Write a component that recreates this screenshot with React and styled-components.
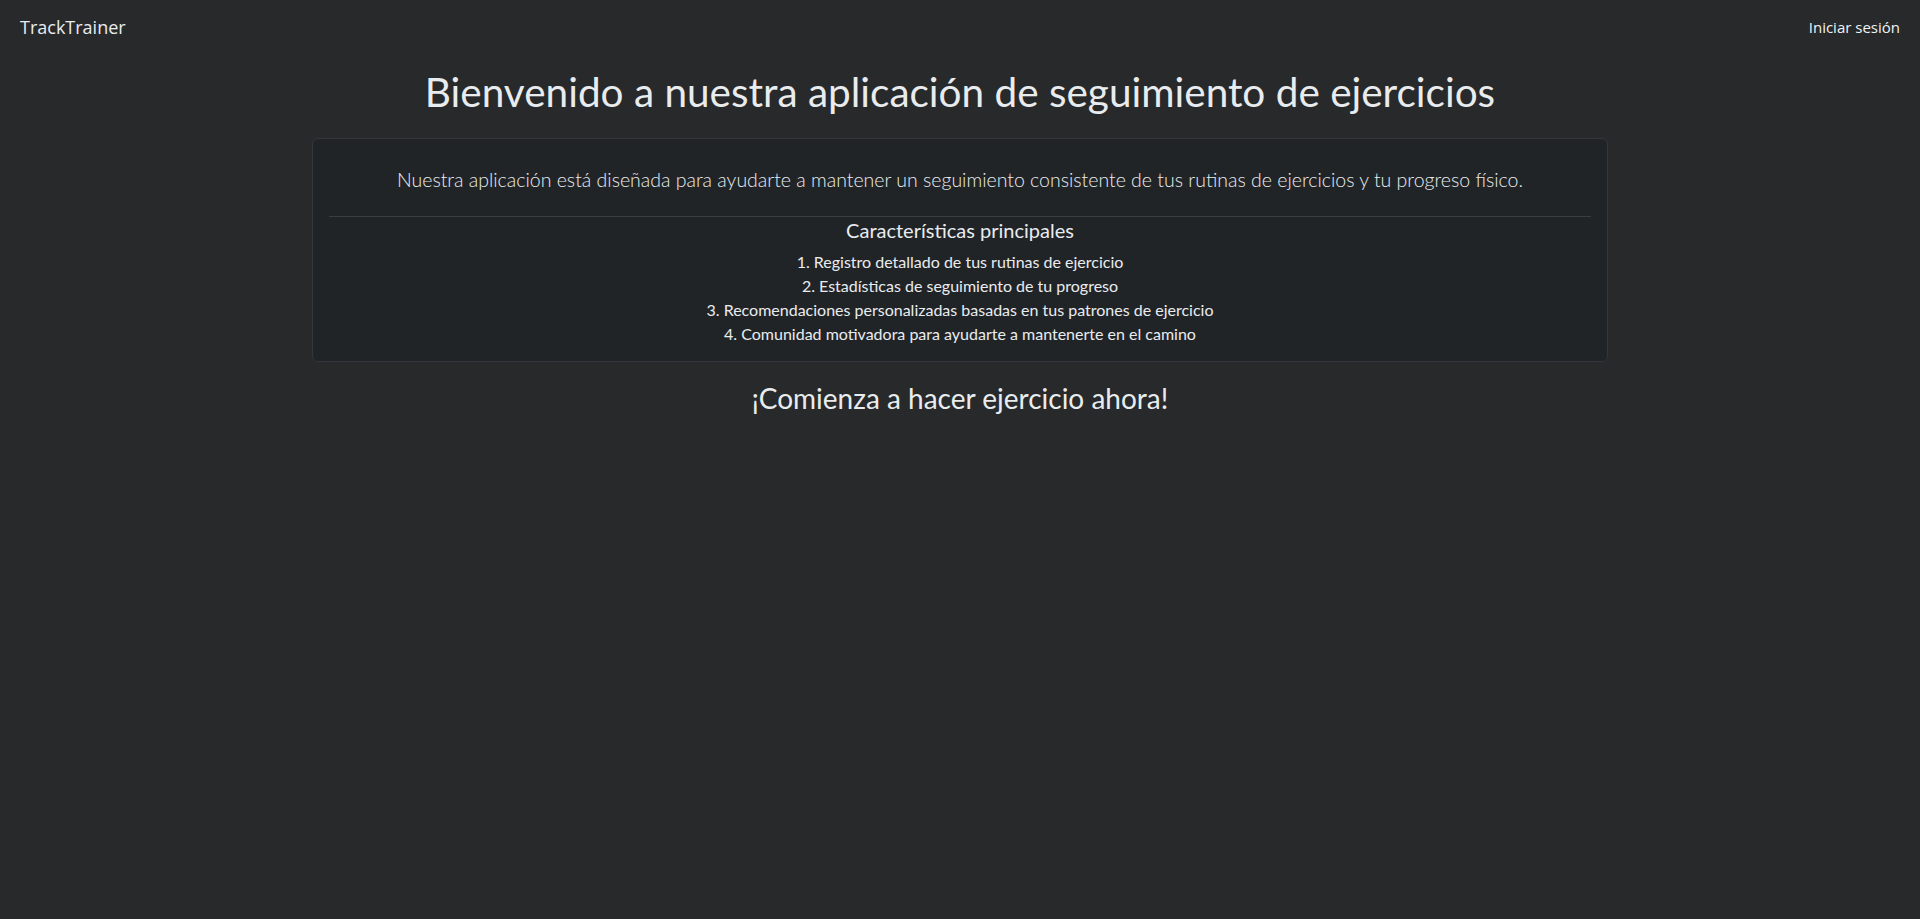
import React from "react"
import styled, { createGlobalStyle } from "styled-components"

const GlobalStyle = createGlobalStyle`
  html, body {
    margin: 0;
    padding: 0;
    background: #27292b;
    color: #dee2e6;
    font-family: Lato, "Open Sans", sans-serif;
    font-size: 16px;
    line-height: 1.5;
  }
  * { box-sizing: border-box; }
`

const features = [
  "Registro detallado de tus rutinas de ejercicio",
  "Estadísticas de seguimiento de tu progreso",
  "Recomendaciones personalizadas basadas en tus patrones de ejercicio",
  "Comunidad motivadora para ayudarte a mantenerte en el camino",
]

export default function App() {
  return (
    <>
      <GlobalStyle />
      <Navbar>
        <Brand href="#">TrackTrainer</Brand>
        <NavLink href="#">Iniciar sesión</NavLink>
      </Navbar>
      <Container>
        <Title>Bienvenido a nuestra aplicación de seguimiento de ejercicios</Title>
        <Card>
          <Lead>
            Nuestra aplicación está diseñada para ayudarte a mantener un seguimiento consistente de tus rutinas de ejercicios y tu progreso físico.
          </Lead>
          <Divider />
          <SubTitle>Características principales</SubTitle>
          <FeatureList>
            {features.map((f, i) => (
              <li key={i}>{i + 1}. {f}</li>
            ))}
          </FeatureList>
        </Card>
        <CallToAction>¡Comienza a hacer ejercicio ahora!</CallToAction>
      </Container>
    </>
  )
}

const Navbar = styled.nav`
  display: flex;
  align-items: center;
  justify-content: space-between;
  height: 54px;
  padding: 0 20px;
  font-family: "Open Sans", sans-serif;
`

const Brand = styled.a`
  color: #e9ecef;
  font-size: 18px;
  text-decoration: none;
`

const NavLink = styled.a`
  color: #f1f3f5;
  font-size: 15px;
  text-decoration: none;
`

const Container = styled.main`
  max-width: 1320px;
  margin: 0 auto;
  padding: 0 12px;
  text-align: center;
`

const Title = styled.h1`
  margin: 14px 0 22px;
  font-size: 40.5px;
  font-weight: 400;
  line-height: 48px;
  color: #e9ecef;
`

const Card = styled.section`
  background: #212427;
  border: 1px solid #33373b;
  border-radius: 6px;
  padding: 26px 16px 15px;
`

const Lead = styled.p`
  margin: 0;
  font-size: 19.5px;
  font-weight: 300;
  line-height: 30px;
  color: #e9ecef;
`

const Divider = styled.hr`
  margin: 21px 0 1px;
  border: 0;
  border-top: 1px solid #3a3e42;
`

const SubTitle = styled.h5`
  margin: 0 0 8px;
  font-size: 20px;
  font-weight: 400;
  line-height: 24px;
  color: #e9ecef;
`

const FeatureList = styled.ul`
  list-style: none;
  margin: 0;
  padding: 0;
  font-size: 16px;
  line-height: 24px;
  color: #e9ecef;
`

const CallToAction = styled.h3`
  margin: 19px 0 0;
  font-size: 28px;
  font-weight: 400;
  line-height: 34px;
  color: #e9ecef;
`
